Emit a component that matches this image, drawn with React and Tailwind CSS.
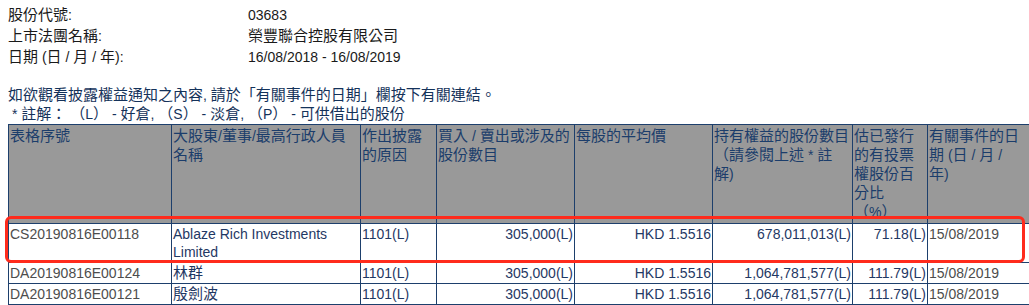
const CJK = /([\u3000-\u303f\u3400-\u9fff\uff00-\uffef]+)/;

// CJK glyphs in the reference advance ~15px while latin runs sit at 14px
function T({ children }) {
  return String(children)
    .split(CJK)
    .map((part, i) =>
      CJK.test(part) ? (
        <span key={i} className="text-[15px] leading-none">
          {part}
        </span>
      ) : (
        part
      )
    );
}

const headers = [
  ["表格序號"],
  ["大股東/董事/最高行政人員", "名稱"],
  ["作出披露", "的原因"],
  ["買入 / 賣出或涉及的", "股份數目"],
  ["每股的平均價"],
  ["持有權益的股份數目", "（請參閱上述 * 註", "解)"],
  ["估已發行", "的有投票", "權股份百", "分比", "（%）"],
  ["有關事件的日", "期 (日 / 月 /", "年)"],
];

const rows = [
  ["CS20190816E00118", "Ablaze Rich Investments Limited", "1101(L)", "305,000(L)", "HKD 1.5516", "678,011,013(L)", "71.18(L)", "15/08/2019"],
  ["DA20190816E00124", "林群", "1101(L)", "305,000(L)", "HKD 1.5516", "1,064,781,577(L)", "111.79(L)", "15/08/2019"],
  ["DA20190816E00121", "殷劍波", "1101(L)", "305,000(L)", "HKD 1.5516", "1,064,781,577(L)", "111.79(L)", "15/08/2019"],
];

const widths = ["w-[163px]", "w-[189px]", "w-[76px]", "w-[138px]", "w-[138px]", "w-[140px]", "w-[75px]", "w-[112px]"];
const align = ["text-left", "text-left", "text-left", "text-right", "text-right", "text-right", "text-right", "text-left"];
const tone = ["text-[#4d4d4d]", "text-[#1f3864]", "text-[#1f3864]", "text-[#1f3864]", "text-[#1f3864]", "text-[#1f3864]", "text-[#1f3864]", "text-[#4d4d4d]"];

export default function App() {
  return (
    <div
      className="relative w-[1029px] h-[305px] overflow-hidden bg-white text-[14px]"
      style={{ fontFamily: '"Liberation Sans", "Noto Sans CJK TC", sans-serif' }}
    >
      <div className="pl-2 pt-[5px]">
        <div className="text-[#1a1a1a] leading-[21px]">
          <div className="flex">
            <div className="w-[240px]"><T>股份代號:</T></div>
            <div>03683</div>
          </div>
          <div className="flex">
            <div className="w-[240px]"><T>上市法團名稱:</T></div>
            <div><T>榮豐聯合控股有限公司</T></div>
          </div>
          <div className="flex">
            <div className="w-[240px]"><T>日期 (日 / 月 / 年):</T></div>
            <div>16/08/2018 - 16/08/2019</div>
          </div>
        </div>
        <div className="h-[18px]" />
        <div className="text-[#14325a] leading-[19px]">
          <div><T>如欲觀看披露權益通知之內容, 請於「有關事件的日期」欄按下有關連結。</T></div>
          <div className="pl-1"><T>* 註解： （L） - 好倉, （S） - 淡倉, （P） - 可供借出的股份</T></div>
        </div>
      </div>

      <table className="relative ml-2 w-[1031px] table-fixed border-collapse">
        <colgroup>
          {widths.map((w, i) => (
            <col key={i} className={w} />
          ))}
        </colgroup>
        <thead>
          <tr className="bg-[#999999] text-[#1b3d6b] leading-[19px]">
            {headers.map((lines, i) => (
              <th key={i} className="border border-[#1d3f6c] px-px pt-[2px] pb-px h-[98px] align-top text-left font-normal">
                {lines.map((l, j) => (
                  <div key={j} className="whitespace-nowrap">
                    <T>{l}</T>
                  </div>
                ))}
              </th>
            ))}
          </tr>
        </thead>
        <tbody>
          {rows.map((r, ri) => (
            <tr key={ri} className="leading-[18px]">
              {r.map((c, ci) => (
                <td
                  key={ci}
                  className={`border border-[#1d3f6c] px-px pt-[1px] pb-px align-top ${align[ci]} ${tone[ci]}`}
                >
                  <T>{c}</T>
                </td>
              ))}
            </tr>
          ))}
        </tbody>
      </table>

      {/* highlight drawn over the first data row */}
      <div className="absolute left-[5px] top-[216px] w-[1020px] h-[47px] rounded-[6px] border-[3px] border-[#ff2b1c] pointer-events-none" />
    </div>
  );
}
